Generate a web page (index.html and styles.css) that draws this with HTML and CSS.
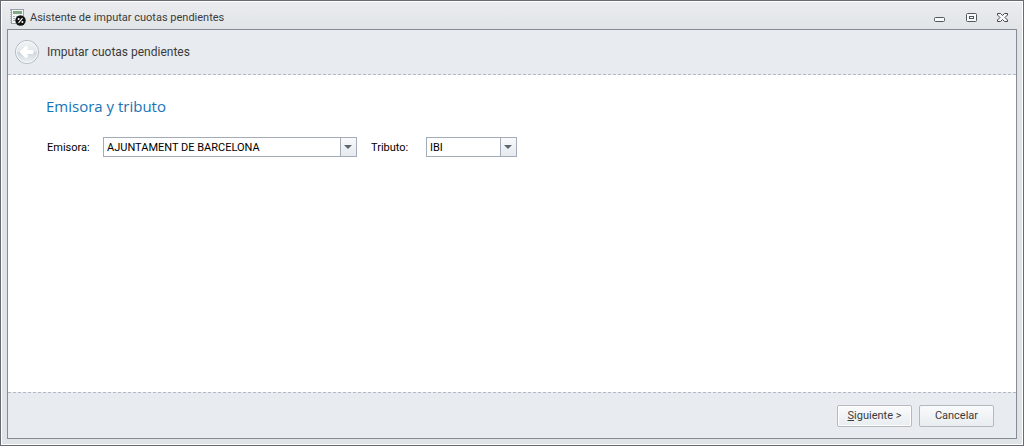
FILE: index.html
```html
<!DOCTYPE html>
<html lang="es">

<head>
    <meta charset="utf-8">
    <meta name="viewport" content="width=device-width, initial-scale=1.0">
    <title>Asistente de imputar cuotas pendientes</title>
    <link rel="stylesheet" href="styles.css">
</head>

<body>
    <div class="ventana">
        <header class="barra">
            <svg class="icono" width="16" height="17" viewBox="0 0 16 17">
                <rect x="1" y="1" width="12" height="13" fill="#f4f6f5" />
                <path d="M0 .5h14M1.5 1v14M1 14.5h5M13.5 1v6" fill="none" stroke="#9aa1aa" />
                <path d="M.5 1v14" stroke="#b9bec5" stroke-dasharray="1 1" />
                <rect x="3" y="2" width="9" height="3" fill="#7fa883" />
                <path d="M3 7.5h2m1 0h2M3 9.5h2M3 11.5h2" stroke="#a9b1ba" />
                <circle cx="10.5" cy="11.5" r="5.2" fill="#111" />
                <path d="M8.5 13.8l4-4.6" stroke="#fff" stroke-width="1.2" />
                <circle cx="8.6" cy="10" r="1" fill="#fff" />
                <circle cx="12.4" cy="13" r="1" fill="#fff" />
            </svg>
            <h1>Asistente de imputar cuotas pendientes</h1>
            <div class="controles">
                <button type="button" aria-label="Minimizar">
                    <svg width="13" height="11" viewBox="0 0 13 11">
                        <rect x=".5" y="5.5" width="10" height="4" rx="1" fill="#f8f9fa" stroke="#535860" />
                    </svg>
                </button>
                <button type="button" aria-label="Maximizar">
                    <svg width="13" height="11" viewBox="0 0 13 11">
                        <rect x="1.5" y="1.5" width="10" height="8" rx="1" fill="#f8f9fa" stroke="#535860" />
                        <rect x="4.5" y="4.5" width="4" height="2" fill="#fff" stroke="#535860" />
                    </svg>
                </button>
                <button type="button" aria-label="Cerrar">
                    <svg width="13" height="11" viewBox="0 0 13 11">
                        <path d="M1.5 1.5h3l2 2 2-2h3V3L9 5.5 11.5 8v1.5h-3l-2-2-2 2h-3V8L4 5.5 1.5 3z" fill="#f8f9fa" stroke="#43484f" />
                    </svg>
                </button>
            </div>
        </header>

        <main class="asistente">
            <div class="cabecera">
                <button type="button" class="atras" aria-label="Atrás">
                    <svg width="26" height="26" viewBox="0 0 26 26">
                        <defs>
                            <linearGradient id="brillo" x1="0" y1="0" x2="0" y2="1">
                                <stop offset="0" stop-color="#f3f5f7" />
                                <stop offset=".5" stop-color="#e2e6ea" />
                                <stop offset=".5" stop-color="#ccd5dd" />
                                <stop offset="1" stop-color="#eef3f6" />
                            </linearGradient>
                        </defs>
                        <circle cx="13" cy="13" r="11.5" fill="url(#brillo)" stroke="#b0b8c2" />
                        <circle cx="13" cy="13" r="10.5" fill="none" stroke="#f7f9fa" />
                        <path d="M6 13l6-6 2 2-2 2.5h7v3h-7l2 2.5-2 2z" fill="#fff" stroke="#fff" stroke-linejoin="round" />
                    </svg>
                </button>
                <span>Imputar cuotas pendientes</span>
            </div>

            <form class="contenido" id="datos">
                <h2>Emisora y tributo</h2>
                <div class="campos">
                    <label for="emisora">Emisora:</label>
                    <div class="combo">
                        <select id="emisora">
                            <option>AJUNTAMENT DE BARCELONA</option>
                        </select>
                    </div>
                    <label for="tributo">Tributo:</label>
                    <div class="combo">
                        <select id="tributo">
                            <option>IBI</option>
                        </select>
                    </div>
                </div>
            </form>

            <footer class="pie">
                <button type="submit" form="datos" class="boton principal"><u>S</u>iguiente &gt;</button>
                <button type="button" class="boton">Cancelar</button>
            </footer>
        </main>
    </div>
</body>

</html>
```
FILE: styles.css
```css
* {
    margin: 0;
    padding: 0;
    box-sizing: border-box;
}

body {
    font-family: Tahoma, Roboto, sans-serif;
    font-size: 11px;
    color: #3b3b3b;
}

button,
select {
    font: inherit;
    color: inherit;
}

.ventana {
    display: flex;
    flex-direction: column;
    min-height: 100vh;
    padding: 0 6px 6px;
    border: 1px solid #666a73;
    box-shadow: inset 0 0 0 1px #ffffff;
    background: linear-gradient(#ebecef, #e0e4e7 30px);
}

/* barra de titulo */
.barra {
    display: flex;
    align-items: center;
    height: 28px;
    padding: 4px 8px 0 3px;
}

.icono {
    margin-right: 4px;
}

.barra h1 {
    flex: 1;
    font-size: 11px;
    font-weight: normal;
}

.controles {
    display: flex;
    gap: 18px;
}

.controles button,
.atras {
    display: flex;
    border: none;
    background: none;
}

.asistente {
    display: flex;
    flex: 1;
    flex-direction: column;
    border: 1px solid #868a92;
    background-color: #ffffff;
}

.cabecera {
    display: flex;
    align-items: center;
    gap: 7px;
    height: 45px;
    padding-left: 6px;
    border-bottom: 1px dashed #b3b8c6;
    background-color: #e8ebf0;
    font-size: 12px;
}

.contenido {
    flex: 1;
    padding: 21px 38px;
}

.contenido h2 {
    margin-bottom: 20px;
    font-family: "Segoe UI", "Open Sans", sans-serif;
    font-size: 15px;
    font-weight: normal;
    line-height: 21px;
    color: #1774b5;
}

.campos {
    display: grid;
    grid-template-columns: 57px 254px 69px 91px;
    align-items: center;
    color: #000000;
}

.campos label {
    padding-left: 1px;
}

.combo + label {
    padding-left: 14px;
}

/* desplegables */
.combo {
    position: relative;
    height: 20px;
    border: 1px solid #a3abb8;
    background-color: #ffffff;
}

.combo select {
    display: block;
    width: 100%;
    height: 18px;
    padding: 0 16px 0 3px;
    border: none;
    background: none;
    appearance: none;
}

.combo::before {
    content: "";
    position: absolute;
    top: 0;
    right: 0;
    bottom: 0;
    width: 15px;
    border-left: 1px solid #a3abb8;
    background: linear-gradient(#f8fafb, #e6eaee);
    pointer-events: none;
}

.combo::after {
    content: "";
    position: absolute;
    top: 7px;
    right: 4px;
    border: 4px solid transparent;
    border-top-color: #5f656e;
    border-bottom: none;
    pointer-events: none;
}

/* botones de abajo */
.pie {
    display: flex;
    justify-content: flex-end;
    align-items: center;
    gap: 7px;
    height: 46px;
    padding-right: 22px;
    border-top: 1px dashed #b3b8c6;
    background-color: #e8ebf0;
}

.boton {
    width: 75px;
    height: 22px;
    border: 1px solid #b4b9c0;
    border-radius: 2px;
    background: linear-gradient(#f9fafb, #e9edf0);
}

.principal {
    box-shadow: inset 0 0 0 1px #ffffff;
}
```
